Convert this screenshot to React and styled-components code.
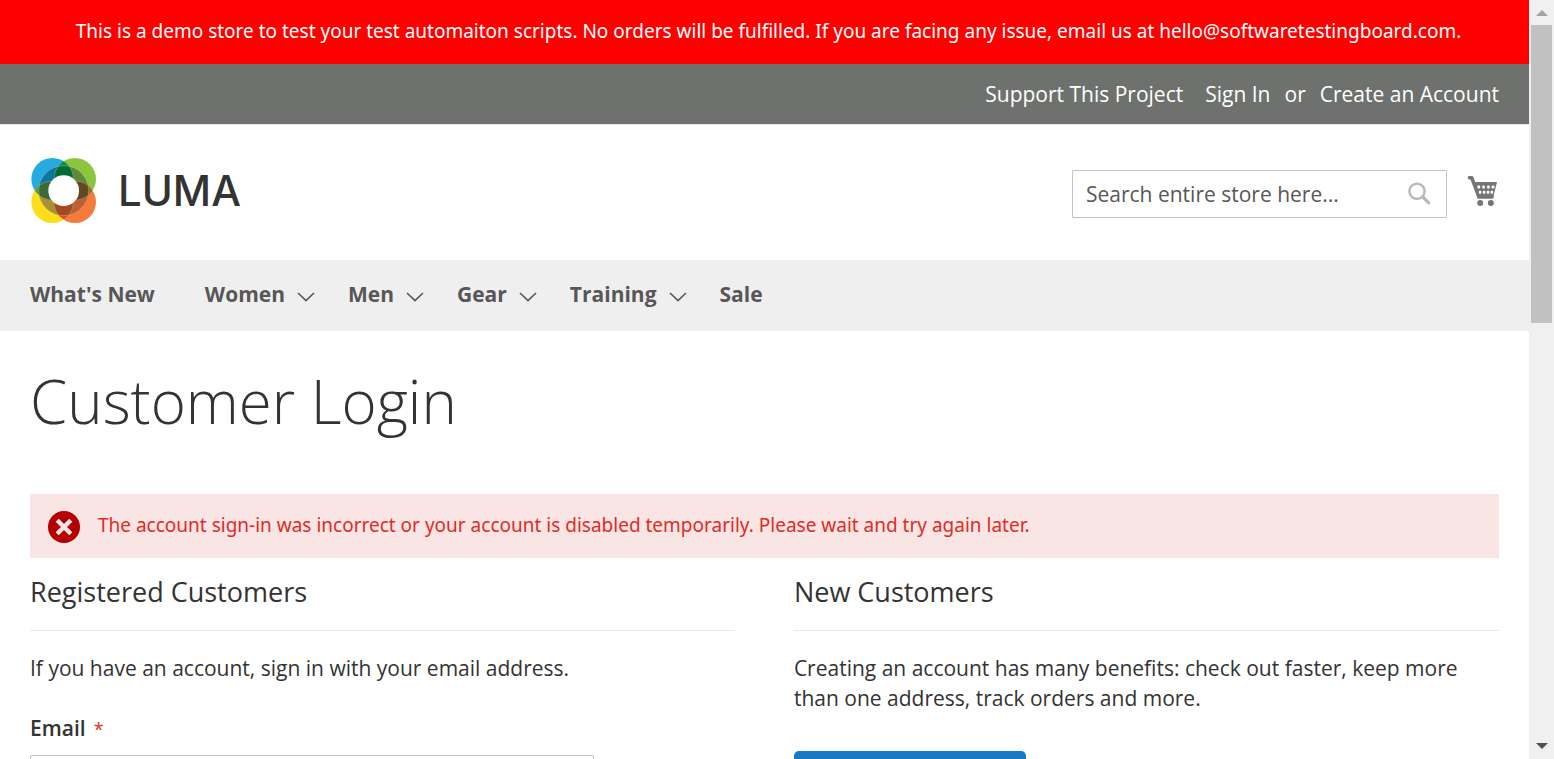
import React from "react";
import styled, { createGlobalStyle } from "styled-components";

const GlobalStyle = createGlobalStyle`
  *, *::before, *::after { box-sizing: border-box; }
  body {
    margin: 0;
    background: #fff;
    color: #333;
    font: 400 21px/30px "Open Sans", "Noto Sans", sans-serif;
  }
`;

const Window = styled.div`
  display: flex;
  height: 100vh;
  overflow: hidden;
`;

const Page = styled.div`
  flex: 1;
  min-width: 0;
  overflow: hidden auto;
  scrollbar-width: none;
`;

const Notice = styled.div`
  padding: 16px 30px 18px 38px;
  background: #ff0000;
  color: #fff;
  font: 400 19px/30px "Noto Sans", "Open Sans", sans-serif;
  text-align: center;
`;

const TopBar = styled.nav`
  display: flex;
  justify-content: flex-end;
  padding: 15px 30px;
  background: #6e716e;
  color: #fff;
`;

const TopLink = styled.a`
  color: #fff;
  text-decoration: none;
  margin-left: ${(p) => p.$gap}px;
`;

const TopWord = styled.span`
  margin-left: 14px;
`;

const Header = styled.header`
  display: flex;
  align-items: center;
  justify-content: space-between;
  padding: 33px 30px 36px;
  border-top: 1px solid #e8e8e8;
`;

const Logo = styled.a`
  display: flex;
  align-items: center;
  gap: 20px;
  color: #333;
  font: 500 42px/66px Inter, "Open Sans", sans-serif;
  text-decoration: none;
`;

const Tools = styled.div`
  display: flex;
  align-items: center;
  gap: 20px;
  padding-right: 1px;
`;

const SearchBox = styled.form`
  display: flex;
  align-items: center;
  width: 375px;
  height: 48px;
  margin-top: 6px;
  padding-right: 14px;
  border: 1px solid #c2c2c2;
  border-radius: 1px;
`;

const SearchInput = styled.input`
  flex: 1;
  min-width: 0;
  padding: 0 13px;
  border: 0;
  outline: 0;
  background: none;
  color: #333;
  font: inherit;
  &::placeholder { color: #575757; opacity: 1; }
`;

const IconButton = styled.button`
  display: flex;
  padding: 0;
  border: 0;
  background: none;
`;

const MainNav = styled.nav`
  display: flex;
  gap: 33px;
  padding: 19px 30px 22px;
  background: #efefef;
`;

const NavLink = styled.a`
  display: flex;
  align-items: center;
  gap: 12px;
  margin-right: ${(p) => (p.$wide ? 17 : 0)}px;
  color: #575757;
  font-weight: 700;
  text-decoration: none;
  svg { margin-top: 6px; }
`;

const Main = styled.main`
  padding: 37px 30px 60px;
`;

const Title = styled.h1`
  margin: 0 0 60px;
  font-size: 60px;
  font-weight: 300;
  line-height: 66px;
`;

const ErrorMessage = styled.div`
  display: flex;
  align-items: center;
  gap: 18px;
  padding: 15px 18px;
  background: #fae5e5;
  color: #e02b27;
  font: 400 19px/30px "Noto Sans", "Open Sans", sans-serif;
  svg { margin-top: 2px; flex: none; }
`;

const MessageText = styled.p`
  margin: 0 0 2px;
`;

const Columns = styled.div`
  display: flex;
  justify-content: space-between;
  padding-top: 16px;
`;

const Column = styled.section`
  width: 48%;
`;

const BlockTitle = styled.h2`
  margin: 0 0 22px;
  padding-bottom: 20px;
  border-bottom: 1px solid #e8e8e8;
  font-size: 27px;
  font-weight: 400;
  line-height: 36px;
`;

const Text = styled.p`
  margin: 0;
`;

const Field = styled.div`
  display: flex;
  flex-direction: column;
  gap: 11px;
  margin-top: 30px;
`;

const Label = styled.label`
  font-weight: 600;
`;

const Required = styled.span`
  margin-left: 8px;
  color: #e02b27;
  font-size: 18px;
  font-weight: 400;
`;

const FieldInput = styled.input`
  width: 80%;
  height: 48px;
  padding: 0 13px;
  border: 1px solid #c2c2c2;
  border-radius: 1px;
  font: inherit;
`;

const PrimaryLink = styled.a`
  display: inline-block;
  margin-top: 38px;
  padding: 21px 23px;
  border-radius: 5px;
  background: #1979c3;
  color: #fff;
  font-weight: 600;
  text-decoration: none;
`;

const Scrollbar = styled.div`
  display: flex;
  flex-direction: column;
  align-items: center;
  justify-content: space-between;
  flex: none;
  width: 25px;
  padding: 10px 0;
  background: #f0f0f0;
`;

const ScrollTop = styled.div`
  display: flex;
  flex-direction: column;
  align-items: center;
  gap: 9px;
`;

const Thumb = styled.div`
  width: 21px;
  height: 298px;
  background: #c1c1c1;
`;

const petals = [
  { id: "blue", cx: 63, cy: 63, fill: "#27a9e1", inner: "#0b76a0" },
  { id: "green", cx: 131, cy: 63, fill: "#8cc63f", inner: "#5d8a3c" },
  { id: "orange", cx: 131, cy: 132, fill: "#f47b3b", inner: "#c05e31" },
  { id: "yellow", cx: 63, cy: 132, fill: "#ffde17", inner: "#a79133" },
];

const overlaps = [
  { a: 0, b: 1, fill: "#009444", inner: "#006b35" },
  { a: 1, b: 2, fill: "#8a7a2c", inner: "#634820" },
  { a: 2, b: 3, fill: "#ee4423", inner: "#a34a24" },
  { a: 3, b: 0, fill: "#4f9a45", inner: "#3b6a34" },
];

function LogoMark() {
  return (
    <svg width="68" height="66" viewBox="-4 1 204 196" aria-hidden="true">
      <defs>
        <clipPath id="ring"><circle cx="97" cy="98" r="75" /></clipPath>
        {petals.map((p) => (
          <clipPath id={p.id} key={p.id}><circle cx={p.cx} cy={p.cy} r="63" /></clipPath>
        ))}
      </defs>
      {petals.map((p) => <circle key={p.id} cx={p.cx} cy={p.cy} r="63" fill={p.fill} />)}
      {overlaps.map((o) => (
        <g key={o.a} clipPath={`url(#${petals[o.a].id})`}>
          <circle cx={petals[o.b].cx} cy={petals[o.b].cy} r="63" fill={o.fill} />
        </g>
      ))}
      <g clipPath="url(#ring)">
        {petals.map((p) => <circle key={p.id} cx={p.cx} cy={p.cy} r="63" fill={p.inner} />)}
        {overlaps.map((o) => (
          <g key={o.a} clipPath={`url(#${petals[o.a].id})`}>
            <circle cx={petals[o.b].cx} cy={petals[o.b].cy} r="63" fill={o.inner} />
          </g>
        ))}
        {petals.map((p) => (
          <circle key={p.id} cx={p.cx} cy={p.cy} r="63" fill="none" stroke="#c9c6a0" strokeOpacity=".5" strokeWidth="2" />
        ))}
      </g>
      <circle cx="97" cy="98" r="75" fill="none" stroke="#c9c6a0" strokeOpacity=".55" strokeWidth="2" />
      <circle cx="97" cy="98" r="46" fill="#fff" />
    </svg>
  );
}

function SearchIcon() {
  return (
    <svg width="24" height="24" viewBox="0 0 24 24" fill="none" stroke="#b8b8b8" aria-hidden="true">
      <circle cx="9" cy="9.2" r="7.6" strokeWidth="2.4" />
      <path d="M14.8 15l5.9 5.9" strokeWidth="3.2" strokeLinecap="round" />
    </svg>
  );
}

function CartIcon() {
  return (
    <svg width="31" height="32" viewBox="0 0 31 32" aria-hidden="true">
      <path d="M2.4 2.8h2.4L12 22H25" fill="none" stroke="#757575" strokeWidth="3.6" strokeLinecap="round" strokeLinejoin="round" />
      <path d="M6 7h24l-3.8 15.5H11.2z" fill="#757575" />
      <g fill="#fff">
        {[10.4, 15.2, 20, 24.6].map((x) => <rect key={x} x={x} y="10.4" width="2.8" height="3" rx="1" />)}
        {[11.8, 15.8, 19.8, 23.6].map((x) => <rect key={x} x={x} y="15.8" width="2.6" height="3" rx="1" />)}
      </g>
      <circle cx="13.2" cy="28" r="3" fill="#757575" />
      <circle cx="23.8" cy="28" r="3" fill="#757575" />
    </svg>
  );
}

function Chevron() {
  return (
    <svg width="18" height="10" viewBox="0 0 18 10" fill="none" stroke="#575757" strokeWidth="1.6" aria-hidden="true">
      <path d="M1 1l8 7.6L17 1" />
    </svg>
  );
}

function ErrorIcon() {
  return (
    <svg width="32" height="32" viewBox="0 0 32 32" aria-hidden="true">
      <circle cx="16" cy="16" r="16" fill="#b30000" />
      <path d="M9.2 9.2l13.6 13.6M22.8 9.2L9.2 22.8" stroke="#fae5e5" strokeWidth="4.4" />
    </svg>
  );
}

const categories = [
  { name: "What's New", wide: true },
  { name: "Women", menu: true },
  { name: "Men", menu: true },
  { name: "Gear", menu: true },
  { name: "Training", menu: true },
  { name: "Sale" },
];

export default function App() {
  return (
    <Window>
      <GlobalStyle />
      <Page>
        <Notice>
          This is a demo store to test your test automaiton scripts. No orders will be fulfilled. If you are facing any
          issue, email us at hello@softwaretestingboard.com.
        </Notice>
        <TopBar>
          <TopLink href="#support" $gap={0}>Support This Project</TopLink>
          <TopLink href="#signin" $gap={22}>Sign In</TopLink>
          <TopWord>or</TopWord>
          <TopLink href="#create" $gap={14}>Create an Account</TopLink>
        </TopBar>
        <Header>
          <Logo href="#home"><LogoMark />LUMA</Logo>
          <Tools>
            <SearchBox onSubmit={(e) => e.preventDefault()}>
              <SearchInput type="text" aria-label="Search" placeholder="Search entire store here..." />
              <IconButton type="submit" aria-label="Search"><SearchIcon /></IconButton>
            </SearchBox>
            <IconButton type="button" aria-label="My Cart"><CartIcon /></IconButton>
          </Tools>
        </Header>
        <MainNav>
          {categories.map((c) => (
            <NavLink key={c.name} href="#category" $wide={c.wide}>
              {c.name}
              {c.menu && <Chevron />}
            </NavLink>
          ))}
        </MainNav>
        <Main>
          <Title>Customer Login</Title>
          <ErrorMessage role="alert">
            <ErrorIcon />
            <MessageText>The account sign-in was incorrect or your account is disabled temporarily. Please wait and try again later.</MessageText>
          </ErrorMessage>
          <Columns>
            <Column>
              <BlockTitle>Registered Customers</BlockTitle>
              <Text>If you have an account, sign in with your email address.</Text>
              <Field>
                <Label htmlFor="email">Email<Required>*</Required></Label>
                <FieldInput id="email" type="email" />
              </Field>
            </Column>
            <Column>
              <BlockTitle>New Customers</BlockTitle>
              <Text>Creating an account has many benefits: check out faster, keep more than one address, track orders and more.</Text>
              <PrimaryLink href="#create">Create an Account</PrimaryLink>
            </Column>
          </Columns>
        </Main>
      </Page>
      <Scrollbar aria-hidden="true">
        <ScrollTop>
          <svg width="12" height="6" viewBox="0 0 12 6"><path d="M6 0l6 6H0z" fill="#a3a3a3" /></svg>
          <Thumb />
        </ScrollTop>
        <svg width="12" height="6" viewBox="0 0 12 6"><path d="M0 0h12L6 6z" fill="#505050" /></svg>
      </Scrollbar>
    </Window>
  );
}
